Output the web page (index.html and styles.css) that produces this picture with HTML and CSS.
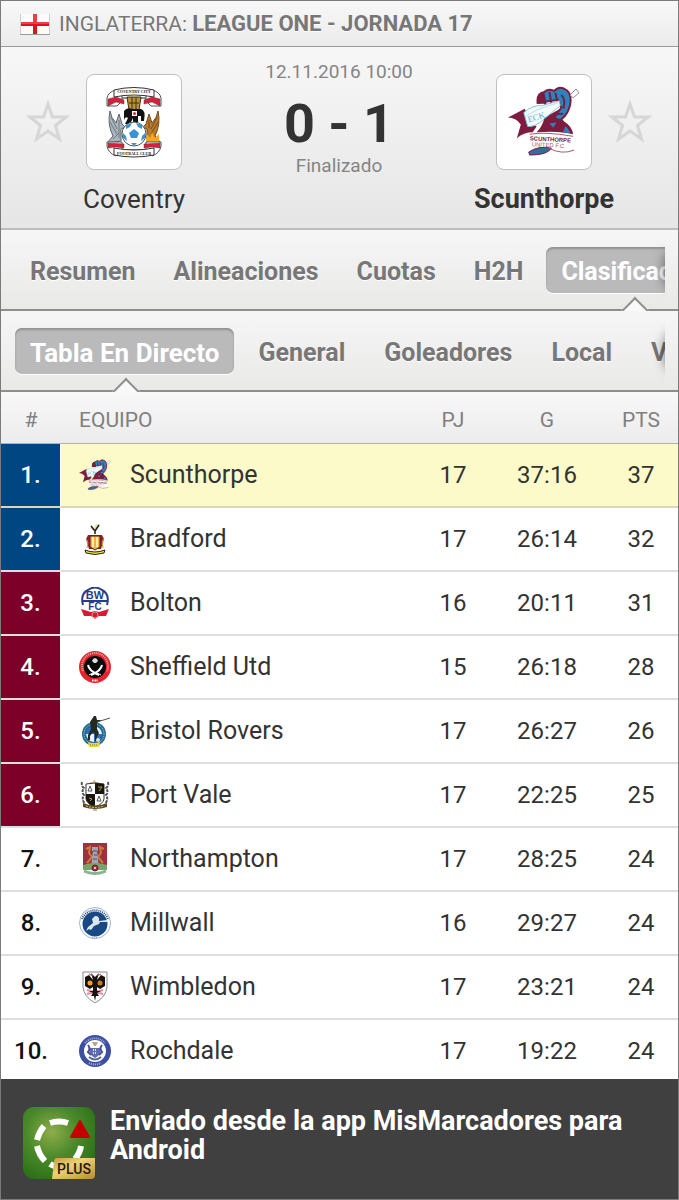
FILE: index.html
```
<!DOCTYPE html>
<html lang="es">
<head>
    <meta charset="UTF-8">
    <meta name="viewport" content="width=device-width, initial-scale=1.0">
    <title>Coventry - Scunthorpe</title>
    <link rel="stylesheet" href="styles.css">
</head>
<body>
    <div class="page">
        <header class="league">
            <svg class="flag" viewBox="0 0 30 22" role="img" aria-label="Inglaterra">
                <rect x="1" y="1" width="28" height="20" fill="#fbfbfb"/>
                <path d="M1 11 H29 M15 1 V21" stroke="#e0121a" stroke-width="4"/>
                <path d="M1 1 H29 V11 H1Z" fill="#fff" opacity=".2"/>
                <path d="M0 21.500 H30" stroke="#9a9a9a"/>
                <path d="M.5 1 V21 M29.500 1 V21" stroke="#d0d0d0"/>
            </svg>
            <h1>Inglaterra: <b>League One - Jornada 17</b></h1>
        </header>

        <section class="match">
            <button class="fav" type="button" aria-label="Seguir a Coventry">
                <svg viewBox="0 0 44 44">
                    <path id="star" d="M22 4 L26.5 17 H40 L29.5 25.500 L33.500 39 L22 31 L10.500 39 L14.500 25.500 L4 17 H17.500 Z" fill="none" stroke="#d6d6d6" stroke-width="3"/>
                </svg>
            </button>
            <div class="badge">
                <svg viewBox="0 0 72 72">
                    <path d="M17 12 H55 M17 64 H55" stroke="#222" stroke-width="1"/>
                    <!-- top ribbons -->
                    <path d="M18 4 Q10 6 9 12 V20 H19 L24 15 V8Z M54 4 Q62 6 63 12 V20 H53 L48 15 V8Z" fill="#fff" stroke="#555"/>
                    <path d="M10 13 L18 11 L26 14 V18 L18 16 L10 20Z M62 13 L54 11 L46 14 V18 L54 16 L62 20Z" fill="#d9203a" stroke="#444" stroke-width=".5"/>
                    <path d="M16 4 Q36 -1 56 4 V11 Q36 7 16 11Z" fill="#fff" stroke="#333"/>
                    <text x="36" y="7" text-anchor="middle" font-family="Liberation Serif, serif" font-size="4" font-weight="bold" fill="#222">COVENTRY CITY</text>
                    <!-- elephant and castle -->
                    <path d="M29 11 H43 L41 24 H31Z" fill="#b99238" stroke="#403014"/>
                    <path d="M34 11 V24 M38 11 V24 M31 17 H41" stroke="#403014"/>
                    <path d="M26 25 Q29 21 34 23 H43 Q48 24 46 35 H43 V30 H40 V38 H35 V32 L32 38 H27 L30 32 Q27 30 26 34Z" fill="#111"/>
                    <rect x="34" y="25" width="5" height="5" fill="#fff"/>
                    <circle cx="36.500" cy="27.500" r="1.500" fill="#d9203a"/>
                    <!-- eagle and phoenix -->
                    <path d="M12 25 Q13 32 18 37 L21 28 L24 38 L27 41 L23 43 V55 L9 57 L15 50 Q9 38 12 25Z" fill="#a9b4bc" stroke="#59656e"/>
                    <path d="M60 25 Q59 32 54 37 L51 28 L48 38 L45 41 L49 43 V55 L63 57 L57 50 Q63 38 60 25Z" fill="#b67b2c" stroke="#75471c"/>
                    <path d="M13 31 L19 43 M12 36 L19 48 M21 34 V52 M15 53 L21 47" stroke="#6d7a83" fill="none"/>
                    <path d="M59 31 L53 43 M60 36 L53 48 M51 34 V42" stroke="#7d4b1a" fill="none"/>
                    <path d="M48 57 L49 48 L52 52 L54 46 L57 52 L61 48 L61 57Z" fill="#f3a81d"/>
                    <!-- ball -->
                    <circle cx="36" cy="48" r="12" fill="#fff" stroke="#555"/>
                    <path d="M36 43 L41 47 L39 52 H33 L31 47Z M28 39 L34 37 L32 41 L28 43Z M44 39 L38 37 L40 41 L44 43Z M25 47 L28 50 L29 55 L25 52Z M47 47 L44 50 L43 55 L47 52Z M33 57 H39 L36 60Z" fill="#3796d2"/>
                    <!-- bottom ribbons -->
                    <path d="M9 56 H24 V63 L18 70 Q10 67 9 60Z M63 56 H48 V63 L54 70 Q62 67 63 60Z" fill="#fff" stroke="#555"/>
                    <path d="M10 57 L26 58 V62 L18 61 L10 62Z M62 57 L46 58 V62 L54 61 L62 62Z" fill="#d9203a" stroke="#444" stroke-width=".5"/>
                    <path d="M16 62 Q36 66 56 62 V69 Q36 73 16 69Z" fill="#fff" stroke="#333"/>
                    <text x="36" y="69" text-anchor="middle" font-family="Liberation Serif, serif" font-size="4" font-weight="bold" fill="#222">FOOTBALL CLUB</text>
                </svg>
            </div>
            <div class="result">
                <time datetime="2016-11-12T10:00">12.11.2016 10:00</time>
                <strong>0 - 1</strong>
                <span>Finalizado</span>
            </div>
            <div class="badge">
                <svg viewBox="2 6 73 73">
                    <g id="scunthorpe">
                        <path d="M2 38 L19 29 L24 42 L31 47 L27 53 Q18 53 11 59 L15 45 Q10 38 2 38Z" fill="#7d1c3f"/>
                        <path d="M39 38 L55 29 Q53 36 59 42 Q67 47 68 55 Q53 51 31 53 Q37 47 39 38Z" fill="#7d1c3f"/>
                        <path d="M32 23 Q31 13 39 12 Q42 8 49 11 Q54 5 61 10 Q67 14 65 25 Q63 34 57 39 Q54 42 49 38 L56 28 L53 20Z" fill="#2f83bd" stroke="#7d1c3f" stroke-width="2"/>
                        <path d="M32 24 Q31 14 38 13 L41 24Z" fill="#7d1c3f"/>
                        <path d="M38 13 L40 25 M44 12 L46 24 M50 13 L52 22 M56 15 Q61 20 58 29 M48 35 L58 34" fill="none" stroke="#6b2148" stroke-width="2"/>
                        <path d="M18 33 Q27 25 36 26 L54 21 L55 26 L39 39 Q30 48 22 47Z" fill="#f4fbfd" stroke="#85c3d5"/>
                        <path d="M20 37 Q30 29 53 23" fill="none" stroke="#b4dde8"/>
                        <path d="M65 15 L71 9 L74 13 L68 18Z" fill="#fff" stroke="#889"/>
                        <text x="23" y="43" font-family="Liberation Serif, serif" font-size="9" fill="#5ea8c8" transform="rotate(-17 23 43)">ECK</text>
                        <path d="M44 44 L51 43 L48 48Z M60 47 Q63 48 65 54 L58 53Z" fill="#2f83bd"/>
                        <path d="M24 55 Q39 52 68 57 L68 68 Q55 74 43 70 Q32 67 22 68Z" fill="#fff"/>
                        <path d="M23 73 Q33 66 46 69 Q42 76 24 76Z" fill="#326c9c" stroke="#7d1c3f"/>
                        <path d="M24 55 Q39 52 68 57 M43 69 Q57 76 69 71" fill="none" stroke="#a9556f"/>
                        <text x="24" y="61" font-family="Liberation Sans, sans-serif" font-size="6" font-weight="bold" fill="#7d1c3f" transform="rotate(3 24 61)">SCUNTHORPE</text>
                        <text x="26" y="67" font-family="Liberation Sans, sans-serif" font-size="6" fill="#a9556f" transform="rotate(3 26 67)">UNITED F.C.</text>
                    </g>
                </svg>
            </div>
            <button class="fav" type="button" aria-label="Seguir a Scunthorpe"><svg viewBox="0 0 44 44"><use href="#star"/></svg></button>
            <div class="team home">Coventry</div>
            <div class="team away">Scunthorpe</div>
        </section>

        <nav class="tabs">
            <div class="scroller">
                <button type="button">Resumen</button>
                <button type="button">Alineaciones</button>
                <button type="button">Cuotas</button>
                <button type="button">H2H</button>
                <button type="button" class="active">Clasificación</button>
            </div>
        </nav>

        <nav class="tabs sub">
            <div class="scroller">
                <button type="button" class="active">Tabla En Directo</button>
                <button type="button">General</button>
                <button type="button">Goleadores</button>
                <button type="button">Local</button>
                <button type="button">Visitante</button>
            </div>
        </nav>

        <table class="standings">
            <colgroup>
                <col class="col-rank">
                <col class="col-crest">
                <col>
                <col class="col-num">
                <col class="col-num">
                <col class="col-pts">
            </colgroup>
            <thead>
                <tr><th>#</th><th class="club" colspan="2">Equipo</th><th>PJ</th><th>G</th><th class="pts">PTS</th></tr>
            </thead>
            <tbody>
                <tr class="promo current">
                    <td class="rank">1.</td>
                    <td class="crest"><svg viewBox="2 6 73 73"><use href="#scunthorpe"/></svg></td>
                    <td>Scunthorpe</td><td class="num">17</td><td class="num">37:16</td><td class="num pts">37</td>
                </tr>
                <tr class="promo">
                    <td class="rank">2.</td>
                    <td class="crest">
                        <svg viewBox="0 0 32 32">
                            <path d="M12 2 L15 5 L17 1 L21 1 L19 6 L17 8 V11 H15 V8 L12 6Z" fill="#e9e3b8"/>
                            <path d="M12 3 L16 8 L20 2 M16 8 V11" stroke="#222" stroke-width="1.500" fill="none"/>
                            <path d="M9 12 H23 L25 16 L22 26 H10 L7 16Z" fill="#8d2034"/>
                            <path d="M11 13 H21 V24 L16 27 L11 24Z" fill="#f5b13c" stroke="#5d2325"/>
                            <path d="M14 14 V24 M18 14 V24" stroke="#ffe9bf" stroke-width="2"/>
                            <path d="M7 16 Q10 18 8 25 M25 16 Q22 18 24 25" stroke="#d79a35" stroke-width="1" fill="none"/>
                            <path d="M6 27 Q16 31 26 27 L25 30 Q16 33 7 30Z" fill="#f4e13c" stroke="#282511"/>
                        </svg>
                    </td>
                    <td>Bradford</td><td class="num">17</td><td class="num">26:14</td><td class="num pts">32</td>
                </tr>
                <tr class="playoff">
                    <td class="rank">3.</td>
                    <td class="crest">
                        <svg viewBox="0 0 32 32">
                            <path d="M4 18 Q1 7 9 3 Q16 -2 23 3 Q31 7 28 18 M3 14 H29" fill="none" stroke="#273d8b" stroke-width="2"/>
                            <g font-family="Liberation Sans, sans-serif" font-weight="bold" fill="#273d8b" text-anchor="middle">
                                <text x="16" y="12" font-size="11">BW</text>
                                <text x="16" y="23" font-size="10">FC</text>
                            </g>
                            <path d="M2 22 L12 25 L16 24 L20 25 L30 22 L27 29 L20 29 L16 32 L12 29 L5 29Z" fill="#dc1931"/>
                            <circle cx="16" cy="28" r="3" fill="#dc1931" stroke="#fff" stroke-width=".5"/>
                        </svg>
                    </td>
                    <td>Bolton</td><td class="num">16</td><td class="num">20:11</td><td class="num pts">31</td>
                </tr>
                <tr class="playoff">
                    <td class="rank">4.</td>
                    <td class="crest">
                        <svg viewBox="0 0 32 32">
                            <circle cx="16" cy="16" r="16" fill="#e5222d"/>
                            <path d="M4 20 A13 13 0 1 1 28 20" fill="none" stroke="#f9a7a9" stroke-width="2" stroke-dasharray="1 1"/>
                            <circle cx="16" cy="16" r="11" fill="#0b0b0b"/>
                            <path d="M16 7 L18 8 L19 10 L17 12 H15 L13 10 L14 8Z" fill="#ddd"/>
                            <path d="M9 14 Q10 20 20 24 M23 14 Q22 20 12 24" fill="none" stroke="#fff" stroke-width="2"/>
                            <path d="M10 24 L14 22 M22 24 L18 22" stroke="#fff"/>
                            <path d="M13 29.500 H19" stroke="#fff" stroke-width="2" stroke-dasharray="1 .5"/>
                        </svg>
                    </td>
                    <td>Sheffield Utd</td><td class="num">15</td><td class="num">26:18</td><td class="num pts">28</td>
                </tr>
                <tr class="playoff">
                    <td class="rank">5.</td>
                    <td class="crest">
                        <svg viewBox="0 0 32 32">
                            <circle cx="15" cy="19" r="12" fill="#246b91"/>
                            <circle cx="15" cy="19" r="10" fill="none" stroke="#acd3c9" stroke-dasharray="1 1"/>
                            <circle cx="15" cy="19" r="8" fill="#2d6fbd"/>
                            <path d="M7 19 H15 V27 Q8 26 7 19Z M15 11 Q22 12 23 19 H15Z" fill="#e9f4f8"/>
                            <path d="M15 1 L17 1 L18 5 L23 5 L18 8 L18 14 L20 18 L18 22 V26 H16 V20 L14 17 L11 21 L11 25 H9 L9 20 L12 14 L11 7Z" fill="#242b25"/>
                            <path d="M18 7 L31 3" stroke="#5a5745"/>
                            <circle cx="19" cy="25" r="2" fill="#ddd"/>
                            <path d="M9 27 Q15 29 21 27 L20 32 H10Z" fill="#ead840"/>
                            <path d="M11 30 H19" stroke="#857a22" stroke-dasharray="1 1"/>
                        </svg>
                    </td>
                    <td>Bristol Rovers</td><td class="num">17</td><td class="num">26:27</td><td class="num pts">26</td>
                </tr>
                <tr class="playoff">
                    <td class="rank">6.</td>
                    <td class="crest">
                        <svg viewBox="0 0 32 32">
                            <path d="M15 0 L17 3 H20 V5 H11 V3 H14Z" fill="#d9c58b"/>
                            <path d="M7 5 L16 4 L25 5 V20 Q24 25 16 28 Q8 25 7 20Z" fill="#fff" stroke="#333"/>
                            <path d="M16 4 L25 5 V15 H16Z M7 15 H16 V28 Q8 25 7 20Z" fill="#19160f"/>
                            <path d="M19 8 H23 L20 12 M10 19 L13 20 L11 22" stroke="#b79748" fill="none"/>
                            <path d="M11 7 L13 12 H9Z M20 17 L22 22 H18Z" fill="#fff" stroke="#555"/>
                            <path d="M3 3 Q2 7 5 9 Q2 13 5 16 Q2 20 6 25 M29 3 Q30 7 27 9 Q30 13 27 16 Q30 20 26 25" fill="none" stroke="#555" stroke-width="2" stroke-dasharray="3 1"/>
                            <path d="M4 24 Q16 29 28 24 V28 Q16 32 4 28Z" fill="#5c4a20"/>
                            <path d="M7 27 Q16 30 25 27" stroke="#d5b961" fill="none" stroke-dasharray="2 1"/>
                            <path d="M14 31 H18" stroke="#777"/>
                        </svg>
                    </td>
                    <td>Port Vale</td><td class="num">17</td><td class="num">22:25</td><td class="num pts">25</td>
                </tr>
                <tr>
                    <td class="rank">7.</td>
                    <td class="crest">
                        <svg viewBox="0 0 32 32">
                            <path d="M4 0 H28 V24 H4Z" fill="#9c3140"/>
                            <path d="M7 6 L11 4 L10 10 L13 14 L8 20 M25 6 L21 4 L22 10 L19 14 L24 20" fill="none" stroke="#ca7c3b" stroke-width="2"/>
                            <path d="M13 4 H19 V8 H18 L20 24 H12 L14 8 H13Z" fill="#a5a3b0"/>
                            <path d="M14 8 H18 M15 12 H18 M14 16 H18" stroke="#4c5165"/>
                            <path d="M4 22 Q16 18 28 22 V27 H4Z" fill="#79a369"/>
                            <circle cx="16" cy="25" r="3" fill="#c82434" stroke="#412c35"/>
                            <circle cx="16" cy="25" r="1" fill="#fff"/>
                            <path d="M5 28 Q16 33 27 28" fill="none" stroke="#8ab491" stroke-width="3"/>
                        </svg>
                    </td>
                    <td>Northampton</td><td class="num">17</td><td class="num">28:25</td><td class="num pts">24</td>
                </tr>
                <tr>
                    <td class="rank">8.</td>
                    <td class="crest">
                        <svg viewBox="0 0 32 32">
                            <circle cx="16" cy="16" r="15.500" fill="#fff" stroke="#9fb3c9"/>
                            <path d="M3 12 A14 14 0 0 1 29 12" fill="none" stroke="#234c82" stroke-width="2" stroke-dasharray="1 1"/>
                            <circle cx="16" cy="17" r="12.500" fill="#184885"/>
                            <path d="M28 13 L20 14 Q21 9 16 9 L13 12 L14 16 L9 20 L7 24 L10 22 L12 23 L15 19 L20 17 L21 15 L28 15Z" fill="#dce7ec"/>
                            <path d="M13 31 H19" stroke="#6e93bd" stroke-dasharray="1 1"/>
                        </svg>
                    </td>
                    <td>Millwall</td><td class="num">16</td><td class="num">29:27</td><td class="num pts">24</td>
                </tr>
                <tr>
                    <td class="rank">9.</td>
                    <td class="crest">
                        <svg viewBox="0 0 32 32">
                            <path d="M4 1 H28 V16 Q27 26 16 32 Q5 26 4 16Z" fill="#fff" stroke="#888"/>
                            <path d="M8 19 L24 23 M24 19 L8 23" stroke="#e88a9c" stroke-width="2"/>
                            <path d="M6 6 L10 4 L14 9 L12 2 L16 6 L20 2 L18 9 L22 4 L26 6 L26 15 L21 18 L18 16 L18 20 L22 20 L18 22 L20 25 L17 25 L16 30 L15 25 L12 25 L14 22 L10 20 L14 20 L14 16 L11 18 L6 15Z" fill="#17120f"/>
                            <path d="M10 3 L14 5 M22 3 L18 5" stroke="#d6404c"/>
                            <circle cx="11" cy="12" r="2.500" fill="#eea32a"/>
                            <circle cx="21" cy="12" r="2.500" fill="#c67d25"/>
                        </svg>
                    </td>
                    <td>Wimbledon</td><td class="num">17</td><td class="num">23:21</td><td class="num pts">24</td>
                </tr>
                <tr>
                    <td class="rank">10.</td>
                    <td class="crest">
                        <svg viewBox="0 0 32 32">
                            <circle cx="16" cy="16" r="16" fill="#3c4fa3"/>
                            <path d="M6 8 A13 13 0 0 1 26 8 M10 28 A13 13 0 0 0 22 28" fill="none" stroke="#a8b2dd" stroke-width="2" stroke-dasharray="1 1"/>
                            <circle cx="16" cy="16" r="11" fill="#fff"/>
                            <path d="M11 13 H21 V18 Q20 21 16 23 Q12 21 11 18Z" fill="#5e6db1"/>
                            <path d="M13 7 H19 L17 11 H15Z" fill="#b8a884"/>
                            <path d="M9 10 Q12 14 9 17 L12 20 M23 10 Q20 14 23 17 L20 20" fill="none" stroke="#46528c" stroke-width="2"/>
                            <path d="M14 15 H18 M14 18 H18" stroke="#f2dfb0" stroke-width="2" stroke-dasharray="1 1"/>
                            <path d="M10 22 Q16 27 22 22" fill="none" stroke="#5d6593" stroke-width="2"/>
                        </svg>
                    </td>
                    <td>Rochdale</td><td class="num">17</td><td class="num">19:22</td><td class="num pts">24</td>
                </tr>
            </tbody>
        </table>

        <footer class="promo-bar">
            <svg class="logo" viewBox="0 0 72 72" role="img" aria-label="MisMarcadores Plus">
                <defs>
                    <radialGradient id="green" cx=".4" cy=".35" r=".7">
                        <stop offset="0" stop-color="#8fac4a"/>
                        <stop offset=".5" stop-color="#4b8a2a"/>
                        <stop offset="1" stop-color="#2b7017"/>
                    </radialGradient>
                    <linearGradient id="gold" x2="1" y2="1">
                        <stop offset="0" stop-color="#c39b3c"/>
                        <stop offset=".4" stop-color="#ecd377"/>
                        <stop offset="1" stop-color="#b98b2a"/>
                    </linearGradient>
                </defs>
                <rect width="72" height="72" rx="11" fill="url(#green)"/>
                <g fill="none" stroke="#fff" stroke-width="6">
                    <path d="M27 16 Q36 13 45 16"/>
                    <path d="M21 19 Q16 25 14 33"/>
                    <path d="M14 39 Q16 48 22 54"/>
                    <path d="M58 39 Q57 46 52 52"/>
                    <path d="M27 57 Q30 59 34 59"/>
                </g>
                <path d="M57 14 L66 30 H48Z" fill="#c40000" stroke="#c40000" stroke-width="2" stroke-linejoin="round"/>
                <path d="M34 51 H72 V68 Q72 72 68 72 H29 L31 55 Q31 51 34 51Z" fill="url(#gold)"/>
                <text x="51" y="67" text-anchor="middle" font-family="Roboto, sans-serif" font-size="14" font-weight="500" fill="#241a05">PLUS</text>
            </svg>
            <p>Enviado desde la app MisMarcadores para Android</p>
        </footer>
    </div>
</body>
</html>
```
FILE: styles.css
```
* {
box-sizing: border-box;
}

body {
margin: 0;
font-family: Roboto, "Liberation Sans", sans-serif;
color: #333;
}

button {
border: none;
background: none;
padding: 0;
font-family: inherit;
cursor: pointer;
}

.page {
border: 1px solid #7b7b7b;
}

/* League bar */
.league {
display: flex;
align-items: center;
gap: 9px;
height: 46px;
padding-left: 19px;
background: linear-gradient(#f8f8f8, #ebebeb);
border-bottom: 1px solid #9b9b9b;
}

.league h1 {
margin: 0;
font-size: 21px;
line-height: 26px;
font-weight: 400;
text-transform: uppercase;
color: #777;
text-shadow: 0 1px 0 #fff;
}

.league b {
font-size: 22px;
}

.flag {
width: 30px;
height: 22px;
}

/* Match header */
.match {
display: grid;
grid-template-columns: 85px 96px 1fr 96px 86px;
grid-template-rows: 96px auto;
row-gap: 13px;
padding: 27px 0 13px;
background: linear-gradient(#f7f7f7, #e6e6e6);
border-bottom: 2px solid #bdbdbd;
}

.fav {
width: 44px;
height: 44px;
align-self: center;
justify-self: end;
margin-right: 16px;
}

.badge + .fav {
justify-self: start;
margin: 0 0 0 16px;
}

.fav svg {
display: block;
}

.badge {
display: flex;
align-items: center;
justify-content: center;
background: #fff;
border: 1px solid #c0c0c0;
border-radius: 8px;
}

.badge svg {
width: 72px;
height: 72px;
}

.result {
display: flex;
flex-direction: column;
align-items: center;
margin-top: -14px;
font-size: 19px;
line-height: 24px;
color: #858585;
}

.result strong {
padding-top: 10px;
font-size: 54px;
line-height: 60px;
color: #333;
}

.team {
grid-row: 2;
justify-self: center;
font-size: 26px;
line-height: 32px;
white-space: nowrap;
}

.home {
grid-column: 2;
}

.away {
grid-column: 4;
font-size: 27px;
font-weight: 700;
}

/* Tabs */
.tabs {
height: 81px;
padding-right: 13px;
background: linear-gradient(#f6f6f6, #e9e9e8);
border-bottom: 2px solid #8e8e8c;
}

.scroller {
position: relative;
display: flex;
align-items: flex-start;
gap: 8px;
height: 81px;
padding: 17px 0 0 14px;
overflow: hidden;
}

.sub .scroller {
gap: 9px;
}

/* shadow on the cut edge */
.scroller::after {
content: "";
position: absolute;
right: -12px;
top: 24px;
width: 10px;
height: 32px;
border-radius: 50%;
box-shadow: 0 0 12px 3px rgba(0, 0, 0, 0.5);
}

.tabs button {
position: relative;
flex: none;
height: 46px;
padding: 4px 15px 0;
border-radius: 7px;
font-size: 25px;
line-height: 42px;
font-weight: 700;
color: #777;
text-shadow: 0 1px 0 #fff;
}

.tabs .active {
background: #bababa;
box-shadow: inset 0 2px 2px #929292, 0 1px 0 #fff;
color: #fff;
text-shadow: none;
}

.sub .active {
font-size: 26px;
}

/* pointer under the active tab */
.tabs .active::after {
content: "";
position: absolute;
left: 50%;
bottom: -28px;
width: 18px;
height: 18px;
margin-left: -9px;
background: #f9f9f9;
border: 2px solid #8e8e8c;
border-width: 2px 0 0 2px;
transform: rotate(45deg);
}

/* Standings */
.standings {
width: 100%;
border-spacing: 0;
table-layout: fixed;
font-size: 25px;
line-height: 30px;
background: #fff;
}

.col-rank {
width: 60px;
}

.col-crest {
width: 69px;
}

.col-num {
width: 94px;
}

.col-pts {
width: 84px;
}

.standings th {
height: 52px;
padding: 4px 0 0;
font-size: 21px;
font-weight: 400;
text-align: center;
text-transform: uppercase;
color: #808080;
background: linear-gradient(#f8f8f8, #ececec);
border-bottom: 1px solid #b0b0b0;
}

.standings td {
height: 64px;
padding: 0;
border-bottom: 2px solid #dedede;
}

.standings .club {
text-align: left;
padding-left: 18px;
}

.rank {
font-size: 24px;
font-weight: 500;
text-align: center;
color: #111;
}

.crest svg {
display: block;
width: 32px;
height: 32px;
margin-left: 18px;
}

.num {
font-size: 24px;
text-align: center;
}

.standings .pts {
padding-left: 10px;
}

.promo .rank {
background: #004682;
color: #fff;
border-right: 1px solid #fff;
}

.playoff .rank {
background: #7d0028;
color: #fff;
border-right: 1px solid #fff;
}

.current td {
background: #fcfac8;
border-bottom-color: #d9d7bb;
}

/* App banner */
.promo-bar {
position: relative;
display: flex;
align-items: flex-start;
gap: 15px;
min-height: 120px;
margin-top: -5px;
padding: 28px 22px 20px;
background: #404040;
color: #fff;
}

.logo {
flex: none;
width: 72px;
height: 72px;
}

.promo-bar p {
margin: 0;
font-size: 27px;
line-height: 29px;
font-weight: 700;
}
```
